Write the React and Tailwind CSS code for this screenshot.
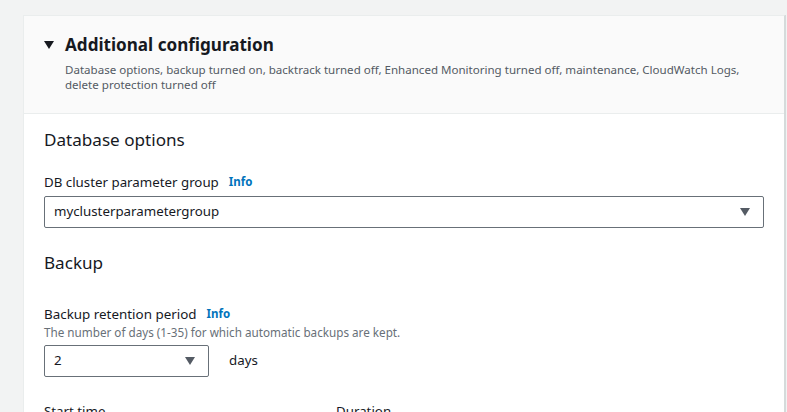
import React from 'react';

const font = { fontFamily: '"Noto Sans", "Open Sans", Arial, sans-serif' };

function Caret({ className = '' }) {
    return (
        <svg width="10" height="8" viewBox="0 0 10 8" className={className} aria-hidden="true">
            <path d="M0 0 H10 L5 8 Z" fill="currentColor" />
        </svg>
    );
}

function Info() {
    return <span className="ml-[10px] text-[11.5px] font-bold text-[#0073bb]">Info</span>;
}

function Select({ value, className = '' }) {
    return (
        <div
            className={`flex h-[32px] items-center justify-between rounded-[2px] border border-[#687078] bg-white pl-[9px] pr-[13px] text-[13.3px] text-[#16191f] ${className}`}
        >
            <span>{value}</span>
            <Caret className="text-[#545b64]" />
        </div>
    );
}

export default function App() {
    return (
        <div className="h-[412px] overflow-hidden bg-[#f2f3f3] pl-[23px] pr-[2px] pt-[15px]" style={font}>
            <div className="border border-r-[#d5dbdb] border-[#eaeded] bg-white shadow-[1px_0_0_#d5dbdb]">
                {/* header */}
                <div className="border-b border-[#eaeded] bg-[#fafafa] pb-[21px] pl-[20px] pr-[20px] pt-[18px]">
                    <div className="flex items-center">
                        <Caret className="mr-[11px] text-[#16191f]" />
                        <h2 className="text-[17.1px] font-bold leading-[22px] text-[#16191f]">Additional configuration</h2>
                    </div>
                    <p className="ml-[21px] mt-[6px] text-[11.55px] leading-[15px] text-[#545b64]">
                        Database options, backup turned on, backtrack turned off, Enhanced Monitoring turned off, maintenance, CloudWatch Logs,
                        delete protection turned off
                    </p>
                </div>

                {/* body */}
                <div className="px-[20px] pb-[20px] pt-[15px] text-[#16191f]">
                    <h3 className="text-[17.1px] leading-[22px]">Database options</h3>

                    <div className="mt-[21px] flex items-center text-[13.3px] leading-[20px]">
                        DB cluster parameter group <Info />
                    </div>
                    <Select value="myclusterparametergroup" className="mt-[4px]" />

                    <h3 className="mt-[24px] text-[17.1px] leading-[22px]">Backup</h3>

                    <div className="mt-[30px] flex items-center text-[13.4px] leading-[20px]">
                        Backup retention period <Info />
                    </div>
                    <p className="text-[11.7px] leading-[16px] text-[#687078]">
                        The number of days (1-35) for which automatic backups are kept.
                    </p>
                    <div className="mt-[5px] flex items-center">
                        <Select value="2" className="w-[165px]" />
                        <span className="ml-[20px] text-[13.3px]">days</span>
                    </div>

                    <div className="mt-[24px] grid grid-cols-[292px_1fr] text-[13.3px] leading-[20px]">
                        <span>Start time</span>
                        <span>Duration</span>
                    </div>
                    <div className="h-[60px]" />
                </div>
            </div>
        </div>
    );
}
